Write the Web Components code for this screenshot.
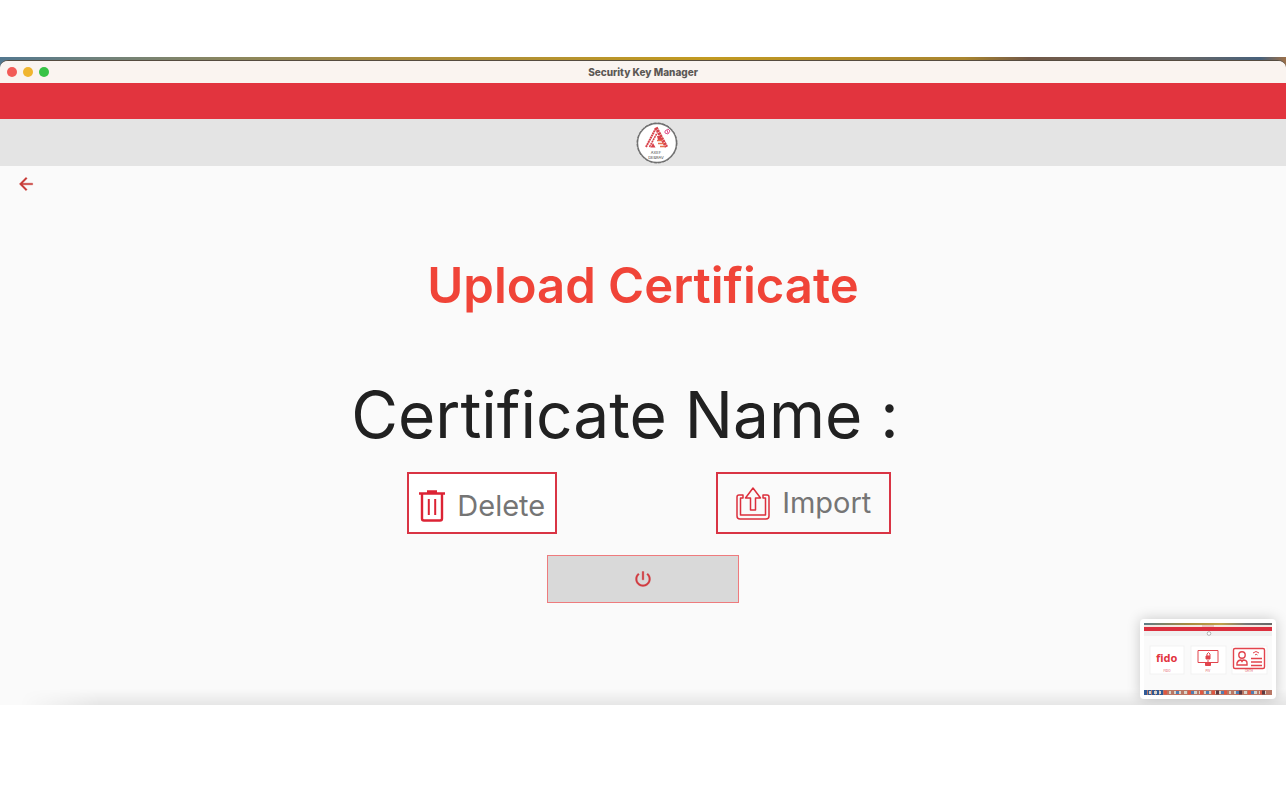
<!DOCTYPE html>
<html lang="en">
<head>
<meta charset="utf-8">
<meta name="viewport" content="width=device-width, initial-scale=1">
<title>Security Key Manager</title>
<style>
    body {
        margin: 0;
        background: #fff;
        font-family: Inter, "Liberation Sans", sans-serif;
    }
</style>
</head>
<body>
<key-manager window-title="Security Key Manager">
    <certificate-page>
        <action-button icon="trash" slot="actions">Delete</action-button>
        <action-button icon="upload" slot="actions">Import</action-button>
    </certificate-page>
    <screen-preview slot="preview"></screen-preview>
</key-manager>

<script>
function createTemplate(html) {
    const template = document.createElement('template');
    template.innerHTML = html;
    return template;
}

class BaseElement extends HTMLElement {
    constructor() {
        super();
        this.attachShadow({ mode: 'open' });
        this.shadowRoot.appendChild(this.constructor.template.content.cloneNode(true));
    }
}

// Round logo in the grey bar
class BrandLogo extends BaseElement {
    static template = createTemplate(`
<style>
    :host { display: block; width: 42px; height: 42px; }
    svg { display: block; width: 100%; height: 100%; }
    text { font: 4px Inter, sans-serif; fill: #444; text-anchor: middle; }
</style>
<svg viewBox="0 0 42 42" role="img" aria-label="Logo">
    <circle cx="21" cy="21" r="19.5" fill="#fff" stroke="#777" stroke-width="1.4"/>
    <circle cx="21" cy="21" r="20" fill="none" stroke="#666" stroke-width=".8" stroke-dasharray="3 1.5"/>
    <g fill="none" stroke="#d8424b">
        <path d="M10 25 20 6" stroke-width="2" stroke-dasharray="2 .4"/>
        <path d="M13.500 25 21 11" stroke-width="1.600" stroke-dasharray="2 .6"/>
        <path d="M20 5.500 30.500 25" stroke-width="3.400" stroke-dasharray="2.4 .5"/>
    </g>
    <path d="M14.500 25.500l2.500-4.500 2.500 4.500zM21 14l4 0 1 4-4 0z" fill="#d8424b"/>
    <path d="M21 18.500h5M22 21.500h6M24 24.500h5" stroke="#e8704c" stroke-width="1.500"/>
    <path d="M29 9l3-2 2 2-2 3-3-1zM31 8l1 3" fill="none" stroke="#e05590" stroke-width="1"/>
    <text x="20" y="32">AXEF</text>
    <text x="20" y="36.500">DEBRAV</text>
</svg>
`);
}
customElements.define('brand-logo', BrandLogo);

// macOS style window: title bar, red bar, logo bar and page
class KeyManager extends BaseElement {
    static template = createTemplate(`
<style>
    :host { display: block; padding: 57px 0 99px; }
    .desktop {
        padding-top: 3px;
        background: linear-gradient(90deg, #53788f 0, #71827a 8%, #a88b3e 30%, #c29a20 55%, #a9852f 75%, #725846 80%, #666 92%, #48617b 98%, #9c7049 100%);
    }
    .window {
        position: relative;
        background: #fafafa;
        border-radius: 8px 8px 0 0;
        border-top: 1px solid #554c40;
        overflow: hidden;
    }
    .titlebar {
        display: grid;
        grid-template-columns: 1fr auto 1fr;
        align-items: center;
        height: 22px;
        padding: 0 7px;
        background: #faf4f0;
    }
    .lights { display: flex; gap: 6px; }
    .lights button {
        width: 10px;
        height: 10px;
        padding: 0;
        border: 0;
        border-radius: 50%;
        background: #f25b57;
    }
    .lights .min { background: #f0b52f; }
    .lights .max { background: #38c346; }
    h1 { margin: 0; font-size: 10px; line-height: 14px; font-weight: 800; color: #5c5855; }
    .red { height: 36px; background: #e2343e; }
    .brand {
        display: flex;
        justify-content: center;
        align-items: center;
        height: 47px;
        padding-left: 27px;
        background: #e4e4e4;
    }
    .shade {
        position: absolute;
        left: 20px;
        right: 0;
        bottom: 0;
        height: 16px;
        background: linear-gradient(transparent, #00000014);
        mask-image: linear-gradient(90deg, transparent, #000 80px);
        pointer-events: none;
    }
    .preview { position: absolute; right: 10px; bottom: 6px; }
</style>
<div class="desktop">
    <div class="window">
        <header>
            <div class="titlebar">
                <div class="lights">
                    <button aria-label="Close"></button>
                    <button class="min" aria-label="Minimize"></button>
                    <button class="max" aria-label="Zoom"></button>
                </div>
                <h1></h1>
            </div>
            <div class="red"></div>
            <div class="brand"><brand-logo></brand-logo></div>
        </header>
        <slot></slot>
        <div class="shade"></div>
        <div class="preview"><slot name="preview"></slot></div>
    </div>
</div>
`);

    connectedCallback() {
        this.shadowRoot.querySelector('h1').textContent = this.getAttribute('window-title');
    }
}
customElements.define('key-manager', KeyManager);

const icons = {
    trash: `<svg width="26" height="32" viewBox="0 0 26 32" fill="none" stroke="#dc2334">
        <path d="M0 3.500h26M8 1.500h10" stroke-width="2.400"/>
        <path d="M3 4v24.500q0 2 2 2h16q2 0 2-2V4" stroke-width="2.400"/>
        <path d="M9.800 9v16M16.200 9v16" stroke-width="2"/>
    </svg>`,
    upload: `<svg width="34" height="33" viewBox="0 0 34 33" fill="none" stroke="#dc2f3c" stroke-width="1.500" stroke-linejoin="round">
        <path d="M17 1l7.500 10h-5v12h-5V11h-5z"/>
        <path d="M7 8H3Q1 8 1 10v19q0 3 3 3h26q3 0 3-3V10q0-2-2-2h-4v3h2.500v17h-25V11H7z"/>
    </svg>`
};

class ActionButton extends BaseElement {
    static template = createTemplate(`
<style>
    :host { display: block; }
    button {
        display: flex;
        align-items: center;
        gap: 12px;
        height: 62px;
        padding: 6px 10px 0;
        border: 2px solid #d93444;
        background: #fff;
        color: #757575;
        font: 400 29px/36px Inter, sans-serif;
        cursor: pointer;
    }
    :host([icon="upload"]) button { padding: 0 18px; background: #fafafa; }
    .icon { display: flex; }
</style>
<button><span class="icon" aria-hidden="true"></span><span><slot></slot></span></button>
`);

    connectedCallback() {
        this.shadowRoot.querySelector('.icon').innerHTML = icons[this.getAttribute('icon')];
    }
}
customElements.define('action-button', ActionButton);

class CertificatePage extends BaseElement {
    static template = createTemplate(`
<style>
    :host { display: block; padding-bottom: 102px; }
    nav { display: flex; padding: 9px 16px; }
    a { display: block; width: 20px; height: 18px; }
    svg { display: block; }
    main { display: flex; flex-direction: column; align-items: center; }
    h2 { margin: 54px 0 0; font-size: 49px; line-height: 60px; font-weight: 600; color: #f04438; }
    .name {
        margin: 59px 0 0;
        padding-right: 36px;
        font-size: 64px;
        line-height: 80px;
        color: #212121;
    }
    .actions {
        display: grid;
        grid-template-columns: 1fr 1fr;
        justify-items: center;
        width: 50%;
        margin: 17px 0 21px;
    }
    .power {
        display: flex;
        justify-content: center;
        align-items: center;
        width: 15%;
        min-width: 100px;
        height: 48px;
        border: 1px solid #ee7b7d;
        background: #d9d9d9;
    }
</style>
<nav>
    <a href="#" aria-label="Back">
        <svg width="20" height="18" viewBox="0 0 24 24" preserveAspectRatio="xMidYMid slice" fill="#c73a36" stroke="#c73a36" stroke-width=".4"><path d="M20 11H7.830l5.590-5.590L12 4l-8 8 8 8 1.410-1.410L7.830 13H20v-2z"/></svg>
    </a>
</nav>
<main>
    <h2>Upload Certificate</h2>
    <p class="name">Certificate Name :</p>
    <div class="actions"><slot name="actions"></slot></div>
    <button class="power" aria-label="Power">
        <svg width="20" height="20" viewBox="0 0 24 24" fill="#d13b40" stroke="#d13b40" stroke-width=".4"><path d="M13 3h-2v10h2V3zm4.830 2.170l-1.420 1.420C17.990 7.860 19 9.810 19 12c0 3.870-3.130 7-7 7s-7-3.130-7-7c0-2.190 1.010-4.140 2.580-5.420L6.170 5.170C4.230 6.820 3 9.260 3 12c0 4.970 4.030 9 9 9s9-4.030 9-9c0-2.740-1.230-5.180-3.170-6.830z"/></svg>
    </button>
</main>
`);
}
customElements.define('certificate-page', CertificatePage);

// Floating thumbnail of the home screen
class ScreenPreview extends BaseElement {
    static template = createTemplate(`
<style>
    :host {
        display: block;
        padding: 4px;
        border-radius: 4px;
        background: #fff;
        box-shadow: 0 0 14px #00000033;
    }
    svg { display: block; width: 128px; height: 72px; }
    .fido { font: 700 11px "Noto Sans", sans-serif; fill: #e2343e; }
    .tiny { font: 3px Inter, sans-serif; fill: #e2545c; text-anchor: middle; }
</style>
<svg viewBox="0 0 128 72" role="img" aria-label="Home screen">
    <defs>
        <linearGradient id="wall"><stop stop-color="#5d7b86"/><stop offset=".35" stop-color="#a88b3e"/><stop offset=".6" stop-color="#c0a04a"/><stop offset=".8" stop-color="#777"/><stop offset="1" stop-color="#666"/></linearGradient>
    </defs>
    <path fill="#fafafa" d="M0 0h128v72H0z"/>
    <path fill="url(#wall)" d="M0 0h128v2H0z"/>
    <path fill="#f3e9e3" d="M0 2h128v2H0z"/>
    <path stroke="#c77" d="M58 3h12" stroke-width=".6"/>
    <path fill="#dc2f3e" d="M0 4h128v4H0z"/>
    <path fill="#f0f0f0" d="M0 8h128v5H0z"/>
    <circle cx="65" cy="10.500" r="1.800" fill="#fff" stroke="#888" stroke-width=".6"/>
    <g fill="#fff" stroke="#eee" stroke-width=".7">
        <rect x="6" y="23" width="34" height="28"/><rect x="47" y="23" width="35" height="28"/><rect x="88" y="23" width="35" height="28"/>
    </g>
    <text class="fido" x="12" y="39">fido</text>
    <text class="tiny" x="23" y="49">FIDO</text>
    <text class="tiny" x="64" y="49">PIV</text>
    <text class="tiny" x="105" y="49">OATH</text>
    <g fill="none" stroke="#e2444d">
        <path d="M54 27.500h20v12H54z"/>
        <path d="M63 33v-2q1.500-3 3 0v2"/><path fill="#e2444d" d="M62 33h4v3h-4zM61.500 40h5v2.500h-5z"/><path d="M64 37v3"/>
        <rect x="89.500" y="25.500" width="31" height="20" rx="1.500" stroke-width="1.400"/>
        <circle cx="98" cy="32" r="3.200" stroke-width="1.400"/>
        <path stroke-width="1.400" d="M93 42v-2q1-3 4-3l1 1.500 1-1.500q4 0 4 3v2zM107 35.500h11M107 39h11M107 42.500h11"/>
        <path d="M109 30q3-3 6 0M111 32q1-1.500 2.500 0"/>
    </g>
    <path fill="#b97765" d="M0 67h128v5H0z"/>
    <path stroke="#315b96" stroke-width="5" stroke-dasharray="3 1" d="M0 69.500h20"/>
    <path stroke="#d9d3c9" stroke-width="3" stroke-dasharray="2 3 3 2" d="M5 69.500h117"/>
    <path stroke="#df5842" stroke-width="4" stroke-dasharray="3 9" d="M20 69.500h104"/>
    <path stroke="#517db2" stroke-width="3" stroke-dasharray="3 12" d="M32 69.500h88"/>
    <path stroke="#5c3b42" stroke-width="4" stroke-dasharray="3 20" d="M72 69.500h56"/>
</svg>
`);
}
customElements.define('screen-preview', ScreenPreview);
</script>
</body>
</html>
